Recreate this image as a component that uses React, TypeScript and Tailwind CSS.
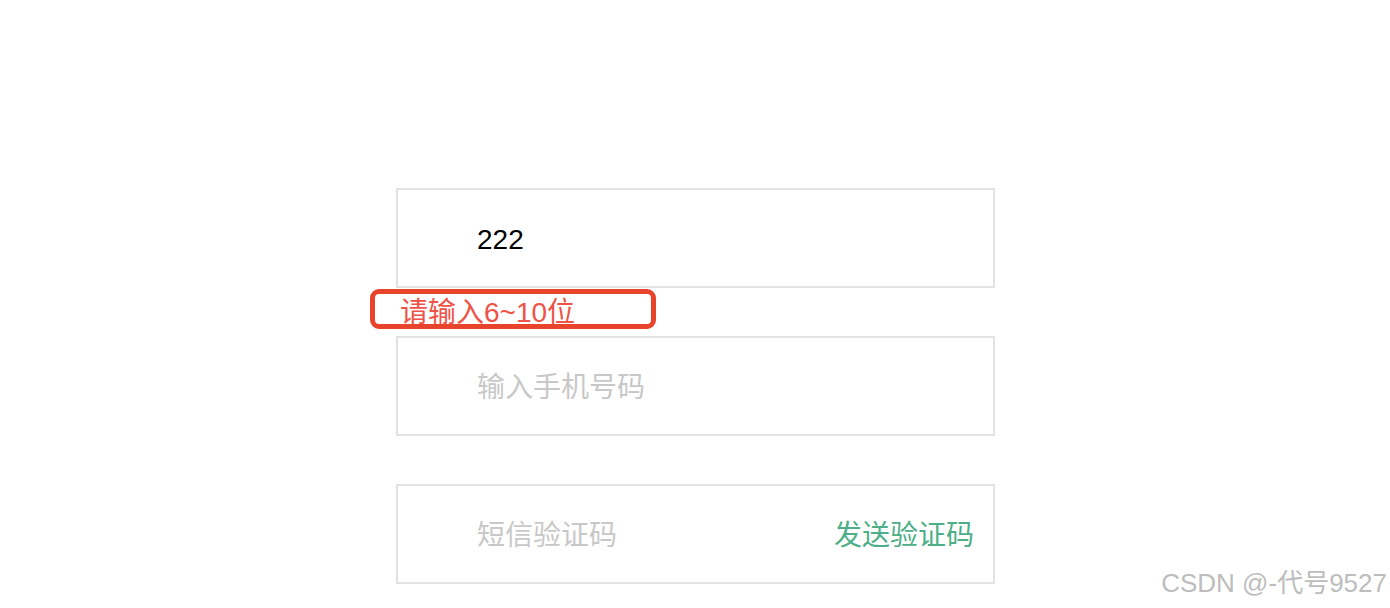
import React from "react";

export default function App() {
  const font = { fontFamily: '"Liberation Sans", "Noto Sans CJK SC", sans-serif' };
  return (
    <div className="relative w-[1390px] h-[608px] bg-white overflow-hidden" style={font}>
      <div className="ml-[396px] w-[599px] pt-[188px] flex flex-col">
        <div className="h-[100px] border-2 border-[#e2e2e2] flex items-center pl-[79px] pr-[19px] pt-[4px]">
          <span className="text-[28px] leading-none text-black">222</span>
        </div>
        <div className="h-[48px] pl-[4px] pt-[11px]">
          <span className="text-[28px] leading-none text-[#ef5246]">请输入6~10位</span>
        </div>
        <div className="h-[100px] border-2 border-[#e2e2e2] flex items-center pl-[79px] pr-[19px] pt-[3px]">
          <span className="text-[28px] leading-none text-[#c8c8c8]">输入手机号码</span>
        </div>
        <div className="h-[48px]" />
        <div className="h-[100px] border-2 border-[#e2e2e2] flex items-center justify-between pl-[79px] pr-[19px] pt-[4px]">
          <span className="text-[28px] leading-none text-[#c8c8c8]">短信验证码</span>
          <span className="text-[28px] leading-none text-[#4caf87]">发送验证码</span>
        </div>
      </div>
      <div className="absolute left-[370px] top-[289px] w-[286px] h-[40px] border-[5px] border-[#e8432b] rounded-[9px]" />
      <div
        className="absolute right-[3px] top-[570px] text-[26px] leading-none text-[#bdbdbd]"
        style={{ textShadow: "0 0 1px #fff, 1px 1px 1px #fff" }}
      >
        CSDN @-代号9527
      </div>
    </div>
  );
}
